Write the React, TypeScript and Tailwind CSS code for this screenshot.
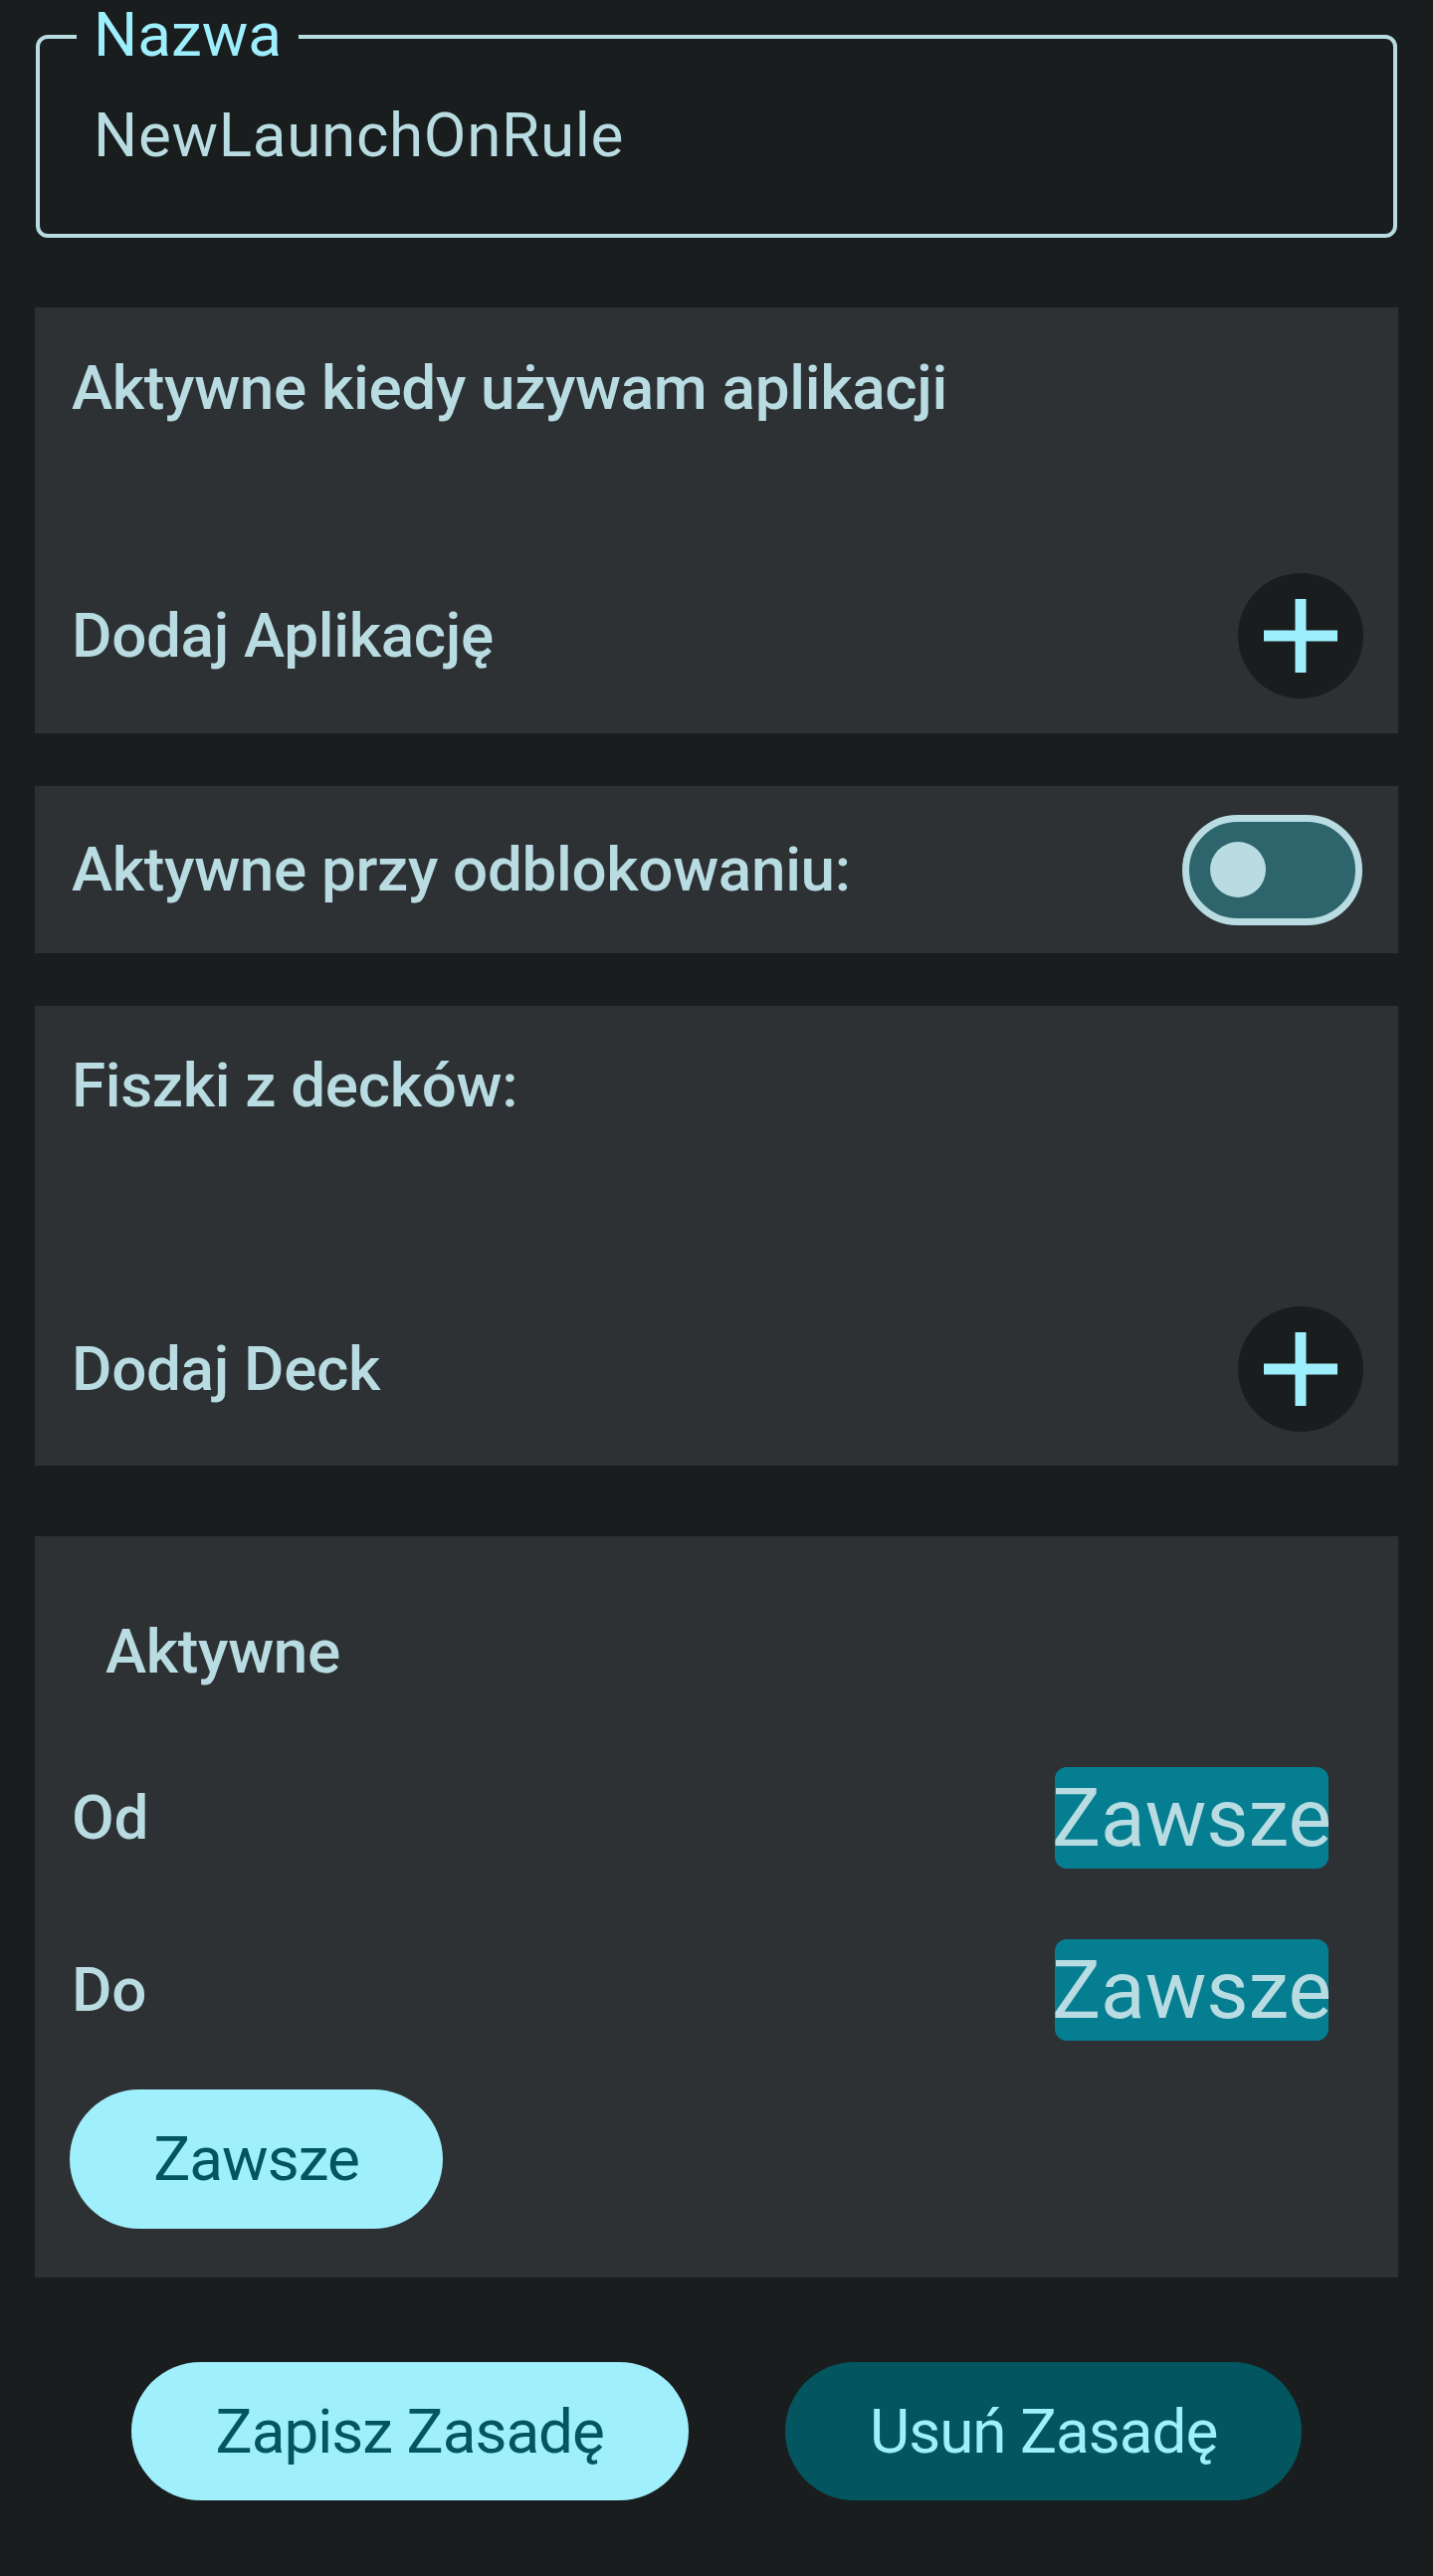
const FONT = 'font-["Roboto","Liberation_Sans",sans-serif]';
const LABEL = 'text-[62px] font-medium leading-none tracking-[-0.33px] text-[#b8dce2]';

function PlusButton() {
  return (
    <button
      type="button"
      className="flex h-[126px] w-[126px] shrink-0 items-center justify-center rounded-full bg-[#1a1d1e]"
    >
      <svg viewBox="0 0 74 74" className="h-[74px] w-[74px]" aria-hidden="true">
        <rect x="31.5" y="0" width="11" height="74" fill="#9eeffd" />
        <rect x="0" y="31.5" width="74" height="11" fill="#9eeffd" />
      </svg>
    </button>
  );
}

function Toggle() {
  return (
    <div className="flex h-[111px] w-[181px] shrink-0 items-center rounded-full border-[7px] border-[#b8dce2] bg-[#2e646b] pl-[21px]">
      <span className="h-[56px] w-[56px] rounded-full bg-[#b8dce2]" />
    </div>
  );
}

function Chip({ children }: { children: string }) {
  return (
    <span className="flex h-[102px] w-[275px] items-center justify-center rounded-[12px] bg-[#067e91] text-[82px] leading-none text-[#b8dce2]">
      {children}
    </span>
  );
}

export default function App() {
  return (
    <div className={`${FONT} min-h-screen bg-[#1a1d1e] px-[35px] pb-[76px] pt-[35px]`}>
      {/* Nazwa */}
      <div className="relative mx-px h-[204px] rounded-[12px] border-4 border-[#b8dce2] pl-[54px] pt-[66px]">
        <span className="absolute left-[37px] top-[-35px] bg-[#1a1d1e] px-[17px] text-[62px] leading-none text-[#9eeffd]">
          Nazwa
        </span>
        <span className="block text-[62px] leading-none tracking-[0.67px] text-[#b8dce2]">
          NewLaunchOnRule
        </span>
      </div>

      {/* Aplikacje */}
      <section className="mt-[70px] flex h-[428px] flex-col bg-[#2d3133] pb-[35px] pl-[37px] pr-[35px] pt-[50px]">
        <h2 className={LABEL}>Aktywne kiedy używam aplikacji</h2>
        <div className="mt-auto flex items-center justify-between">
          <span className={LABEL}>Dodaj Aplikację</span>
          <PlusButton />
        </div>
      </section>

      {/* Odblokowanie */}
      <section className="mt-[53px] flex h-[168px] items-center justify-between bg-[#2d3133] pl-[37px] pr-[36px]">
        <span className={LABEL}>Aktywne przy odblokowaniu:</span>
        <Toggle />
      </section>

      {/* Decki */}
      <section className="mt-[53px] flex h-[462px] flex-col bg-[#2d3133] pb-[34px] pl-[37px] pr-[35px] pt-[49px]">
        <h2 className={LABEL}>Fiszki z decków:</h2>
        <div className="mt-auto flex items-center justify-between">
          <span className={LABEL}>Dodaj Deck</span>
          <PlusButton />
        </div>
      </section>

      {/* Aktywne od / do */}
      <section className="mt-[71px] flex h-[745px] flex-col bg-[#2d3133] pb-[48px] pl-[35px] pr-[70px] pt-[85px]">
        <h2 className={`pl-[36px] ${LABEL}`}>Aktywne</h2>
        <div className="mt-[85px] flex items-center justify-between pl-[2px]">
          <span className={LABEL}>Od</span>
          <Chip>Zawsze</Chip>
        </div>
        <div className="mt-[71px] flex items-center justify-between pl-[2px]">
          <span className={LABEL}>Do</span>
          <Chip>Zawsze</Chip>
        </div>
        <button
          type="button"
          className="mt-[49px] flex h-[140px] w-[375px] items-center justify-center rounded-full bg-[#a0effc] text-[62px] leading-none tracking-[-1px] text-[#03555f]"
        >
          Zawsze
        </button>
      </section>

      {/* Akcje */}
      <div className="mt-[85px] flex justify-center gap-[97px]">
        <button
          type="button"
          className="flex h-[139px] items-center rounded-full bg-[#a0effc] px-[85px] text-[62px] leading-none tracking-[-1px] text-[#03555f]"
        >
          Zapisz Zasadę
        </button>
        <button
          type="button"
          className="flex h-[139px] items-center rounded-full bg-[#03555f] px-[85px] text-[62px] leading-none tracking-[-1px] text-[#a0effc]"
        >
          Usuń Zasadę
        </button>
      </div>
    </div>
  );
}
